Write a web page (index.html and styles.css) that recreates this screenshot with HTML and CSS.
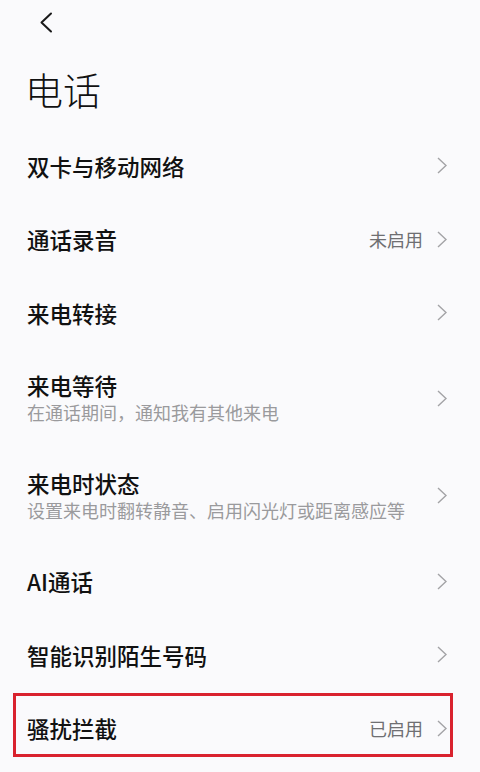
FILE: index.html
```html
<!DOCTYPE html>
<html lang="zh-CN">
<head>
<meta charset="utf-8">
<title>电话</title>
<link rel="stylesheet" href="styles.css">
</head>
<body>
<div class="page">
  <header class="topbar">
    <svg class="back" width="14" height="21" viewBox="0 0 14 21"><polyline points="12,1.5 2.5,10.5 12,19.5" fill="none" stroke="#1a1a1a" stroke-width="2" stroke-linecap="round" stroke-linejoin="round"/></svg>
  </header>
  <h1 class="title">电话</h1>
  <ul class="list">
    <li class="row"><div class="text"><div class="label">双卡与移动网络</div></div><svg class="chev" width="10" height="17" viewBox="0 0 10 17"><polyline points="1,1 9,8.5 1,16" fill="none" stroke="#a3a3a6" stroke-width="1.4"/></svg></li>
    <li class="row"><div class="text"><div class="label">通话录音</div></div><span class="value">未启用</span><svg class="chev" width="10" height="17" viewBox="0 0 10 17"><polyline points="1,1 9,8.5 1,16" fill="none" stroke="#a3a3a6" stroke-width="1.4"/></svg></li>
    <li class="row"><div class="text"><div class="label">来电转接</div></div><svg class="chev" width="10" height="17" viewBox="0 0 10 17"><polyline points="1,1 9,8.5 1,16" fill="none" stroke="#a3a3a6" stroke-width="1.4"/></svg></li>
    <li class="row row-tall"><div class="text"><div class="label">来电等待</div><div class="sub">在通话期间，通知我有其他来电</div></div><svg class="chev" width="10" height="17" viewBox="0 0 10 17"><polyline points="1,1 9,8.5 1,16" fill="none" stroke="#a3a3a6" stroke-width="1.4"/></svg></li>
    <li class="row row-tall"><div class="text"><div class="label">来电时状态</div><div class="sub">设置来电时翻转静音、启用闪光灯或距离感应等</div></div><svg class="chev" width="10" height="17" viewBox="0 0 10 17"><polyline points="1,1 9,8.5 1,16" fill="none" stroke="#a3a3a6" stroke-width="1.4"/></svg></li>
    <li class="row"><div class="text"><div class="label">AI通话</div></div><svg class="chev" width="10" height="17" viewBox="0 0 10 17"><polyline points="1,1 9,8.5 1,16" fill="none" stroke="#a3a3a6" stroke-width="1.4"/></svg></li>
    <li class="row"><div class="text"><div class="label">智能识别陌生号码</div></div><svg class="chev" width="10" height="17" viewBox="0 0 10 17"><polyline points="1,1 9,8.5 1,16" fill="none" stroke="#a3a3a6" stroke-width="1.4"/></svg></li>
    <li class="row row-marked"><div class="text"><div class="label">骚扰拦截</div></div><span class="value">已启用</span><svg class="chev" width="10" height="17" viewBox="0 0 10 17"><polyline points="1,1 9,8.5 1,16" fill="none" stroke="#a3a3a6" stroke-width="1.4"/></svg><span class="highlight"></span></li>
  </ul>
</div>
</body>
</html>
```

FILE: styles.css
```css
html, body {
  margin: 0;
  padding: 0;
  background: #fafafc;
}
body {
  font-family: "Noto Sans CJK SC", "Noto Sans", sans-serif;
  color: #111;
}
.page {
  width: 480px;
  height: 772px;
  overflow: hidden;
}
.topbar {
  height: 45px;
  display: flex;
  align-items: center;
  padding-left: 39px;
}
.back {
  display: block;
}
.title {
  margin: 19px 0 15px;
  padding-left: 25px;
  font-size: 38px;
  line-height: 50px;
  font-weight: 300;
  color: #111;
}
.list {
  list-style: none;
  margin: 0;
  padding: 0;
}
.row {
  position: relative;
  display: flex;
  align-items: center;
  height: 73.5px;
  padding: 0 33px 0 27px;
  box-sizing: border-box;
}
.row-tall {
  height: 97.5px;
}
.text {
  flex: 1;
  min-width: 0;
}
.label {
  font-size: 22.5px;
  line-height: 28px;
  font-weight: 500;
  color: #111;
}
.sub {
  font-size: 18px;
  line-height: 26px;
  color: #9a9a9d;
  white-space: nowrap;
}
.value {
  font-size: 18px;
  line-height: 26px;
  color: #6f6f72;
  margin-right: 14px;
}
.chev {
  display: block;
  flex: none;
}
.highlight {
  position: absolute;
  left: 13px;
  top: 1px;
  width: 440px;
  height: 64px;
  border: 3px solid #d9222e;
  box-sizing: border-box;
  pointer-events: none;
}
```
